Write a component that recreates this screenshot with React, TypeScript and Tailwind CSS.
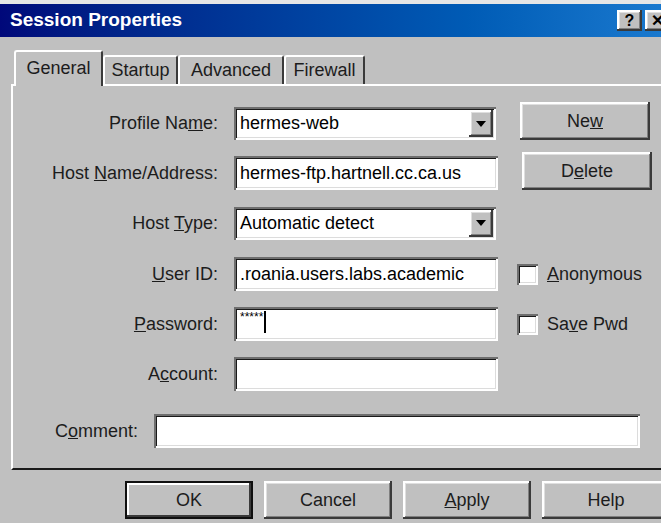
import type { ReactNode } from 'react';

// Classic 3D bevels
const raised =
  'shadow-[inset_-2px_-2px_0_#3a3a3a,inset_2px_2px_0_#ffffff,inset_-3px_-3px_0_#808080,inset_3px_3px_0_#dfdfdf]';
const sunken =
  'shadow-[inset_2px_2px_0_#6e6e6e,inset_-2px_-2px_0_#ffffff,inset_3px_3px_0_#1a1a1a,inset_-3px_-3px_0_#dcdcdc]';

function Label({ children }: { children: ReactNode }) {
  return <div className="w-[205px] shrink-0 text-right text-[18px] text-[#1c1c1c]">{children}</div>;
}

function TextBox({ value, className = '' }: { value?: string; className?: string }) {
  return (
    <div className={`flex items-center bg-white pl-[6px] text-[18px] text-black ${sunken} ${className}`}>
      {value}
    </div>
  );
}

function Combo({ value }: { value: string }) {
  return (
    <div className={`flex h-[33px] w-[262px] items-center justify-between bg-white pl-[6px] pr-[3px] text-[18px] text-black ${sunken}`}>
      <span>{value}</span>
      <div className={`flex h-[27px] w-[24px] items-center justify-center bg-[#c0c0c0] ${raised}`}>
        <div className="h-0 w-0 border-x-[5px] border-t-[6px] border-x-transparent border-t-black" />
      </div>
    </div>
  );
}

function SideButton({ children }: { children: ReactNode }) {
  return (
    <div className={`ml-[24px] flex h-[38px] w-[130px] items-center justify-center bg-[#c0c0c0] text-[18px] text-[#1c1c1c] ${raised}`}>
      {children}
    </div>
  );
}

function Check({ children }: { children: ReactNode }) {
  return (
    <div className="ml-[19px] flex items-center gap-[9px] text-[18px] text-[#1c1c1c]">
      <div className={`h-[21px] w-[21px] bg-white ${sunken}`} />
      <span>{children}</span>
    </div>
  );
}

function Tab({ children, width, active }: { children: ReactNode; width: string; active?: boolean }) {
  return (
    <div
      className={`flex items-center justify-center rounded-t-[3px] border-l-2 border-r-2 border-t-2 border-l-white border-r-[#3a3a3a] border-t-white bg-[#c0c0c0] text-[18px] text-[#1c1c1c] ${width} ${
        active ? 'relative z-10 -mb-[2px] h-[36px] pb-[2px]' : 'h-[29px]'
      }`}
    >
      {children}
    </div>
  );
}

function DlgButton({ children, isDefault }: { children: ReactNode; isDefault?: boolean }) {
  return (
    <div
      className={`flex h-[38px] w-[128px] items-center justify-center bg-[#c0c0c0] text-[18px] text-[#1c1c1c] ${
        isDefault
          ? 'shadow-[inset_0_0_0_2px_#101010,inset_-4px_-4px_0_#3a3a3a,inset_4px_4px_0_#ffffff]'
          : raised
      }`}
    >
      {children}
    </div>
  );
}

export default function App() {
  return (
    <div className="h-[523px] w-[661px] overflow-hidden bg-[#c0c0c0] font-['Liberation_Sans',Arial,sans-serif]">
      <div className="w-[675px]">
        <div className="h-[4px] bg-[#e6e6e6]" />

        {/* Title bar */}
        <div className="flex h-[33px] items-center justify-between bg-gradient-to-r from-[#00087a] to-[#1b7bd0] pl-[10px] pr-[5px]">
          <span className="text-[19px] font-bold text-white">Session Properties</span>
          <div className="flex gap-[3px]">
            <div className={`flex h-[21px] w-[25px] items-center justify-center bg-[#c0c0c0] text-[16px] font-bold leading-none text-black ${raised}`}>
              ?
            </div>
            <div className={`flex h-[21px] w-[25px] items-center justify-center bg-[#c0c0c0] text-[16px] font-bold leading-none text-black ${raised}`}>
              ✕
            </div>
          </div>
        </div>

        {/* Tabs */}
        <div className="mt-[13px] flex h-[34px] items-end pl-[14px]">
          <Tab width="w-[89px]" active>General</Tab>
          <Tab width="w-[75px]">Startup</Tab>
          <Tab width="w-[106px]">Advanced</Tab>
          <Tab width="w-[81px]">Firewall</Tab>
        </div>

        {/* Page */}
        <div className="ml-[11px] border-b-2 border-l-2 border-t-2 border-b-[#1a1a1a] border-l-white border-t-white pb-[20px]">
          <div className="mt-[16px] flex h-[38px] items-end">
            <div className="flex h-[33px] items-center">
              <Label>
                Profile Na<u>m</u>e:
              </Label>
              <div className="ml-[16px]">
                <Combo value="hermes-web" />
              </div>
            </div>
            <SideButton>
              Ne<u>w</u>
            </SideButton>
          </div>

          <div className="mt-[12px] flex h-[38px] items-end">
            <div className="flex h-[34px] items-center">
              <Label>
                Host <u>N</u>ame/Address:
              </Label>
              <TextBox value="hermes-ftp.hartnell.cc.ca.us" className="ml-[16px] h-[34px] w-[264px]" />
            </div>
            <SideButton>
              D<u>e</u>lete
            </SideButton>
          </div>

          <div className="mt-[16px] flex h-[34px] items-center">
            <Label>
              Host <u>T</u>ype:
            </Label>
            <div className="ml-[16px]">
              <Combo value="Automatic detect" />
            </div>
          </div>

          <div className="mt-[17px] flex h-[34px] items-center">
            <Label>
              <u>U</u>ser ID:
            </Label>
            <TextBox value=".roania.users.labs.academic" className="ml-[16px] h-[34px] w-[264px]" />
            <Check>
              <u>A</u>nonymous
            </Check>
          </div>

          <div className="mt-[16px] flex h-[34px] items-center">
            <Label>
              <u>P</u>assword:
            </Label>
            <div className={`ml-[16px] flex h-[34px] w-[264px] items-start bg-white pl-[6px] pt-[4px] ${sunken}`}>
              <span className="text-[12px] leading-none text-black">*****</span>
              <span className="ml-[1px] h-[22px] w-[2px] bg-black" />
            </div>
            <Check>
              Sa<u>v</u>e Pwd
            </Check>
          </div>

          <div className="mt-[16px] flex h-[34px] items-center">
            <Label>
              A<u>c</u>count:
            </Label>
            <TextBox className="ml-[16px] h-[34px] w-[264px]" />
          </div>

          <div className="mt-[23px] flex h-[34px] items-center pl-[42px]">
            <div className="w-[99px] text-[18px] text-[#1c1c1c]">
              C<u>o</u>mment:
            </div>
            <TextBox className="h-[34px] w-[486px]" />
          </div>
        </div>

        {/* Dialog buttons */}
        <div className="mt-[11px] flex gap-[11px] pl-[125px]">
          <DlgButton isDefault>OK</DlgButton>
          <DlgButton>Cancel</DlgButton>
          <DlgButton>
            <u>A</u>pply
          </DlgButton>
          <DlgButton>Help</DlgButton>
        </div>
      </div>
    </div>
  );
}
